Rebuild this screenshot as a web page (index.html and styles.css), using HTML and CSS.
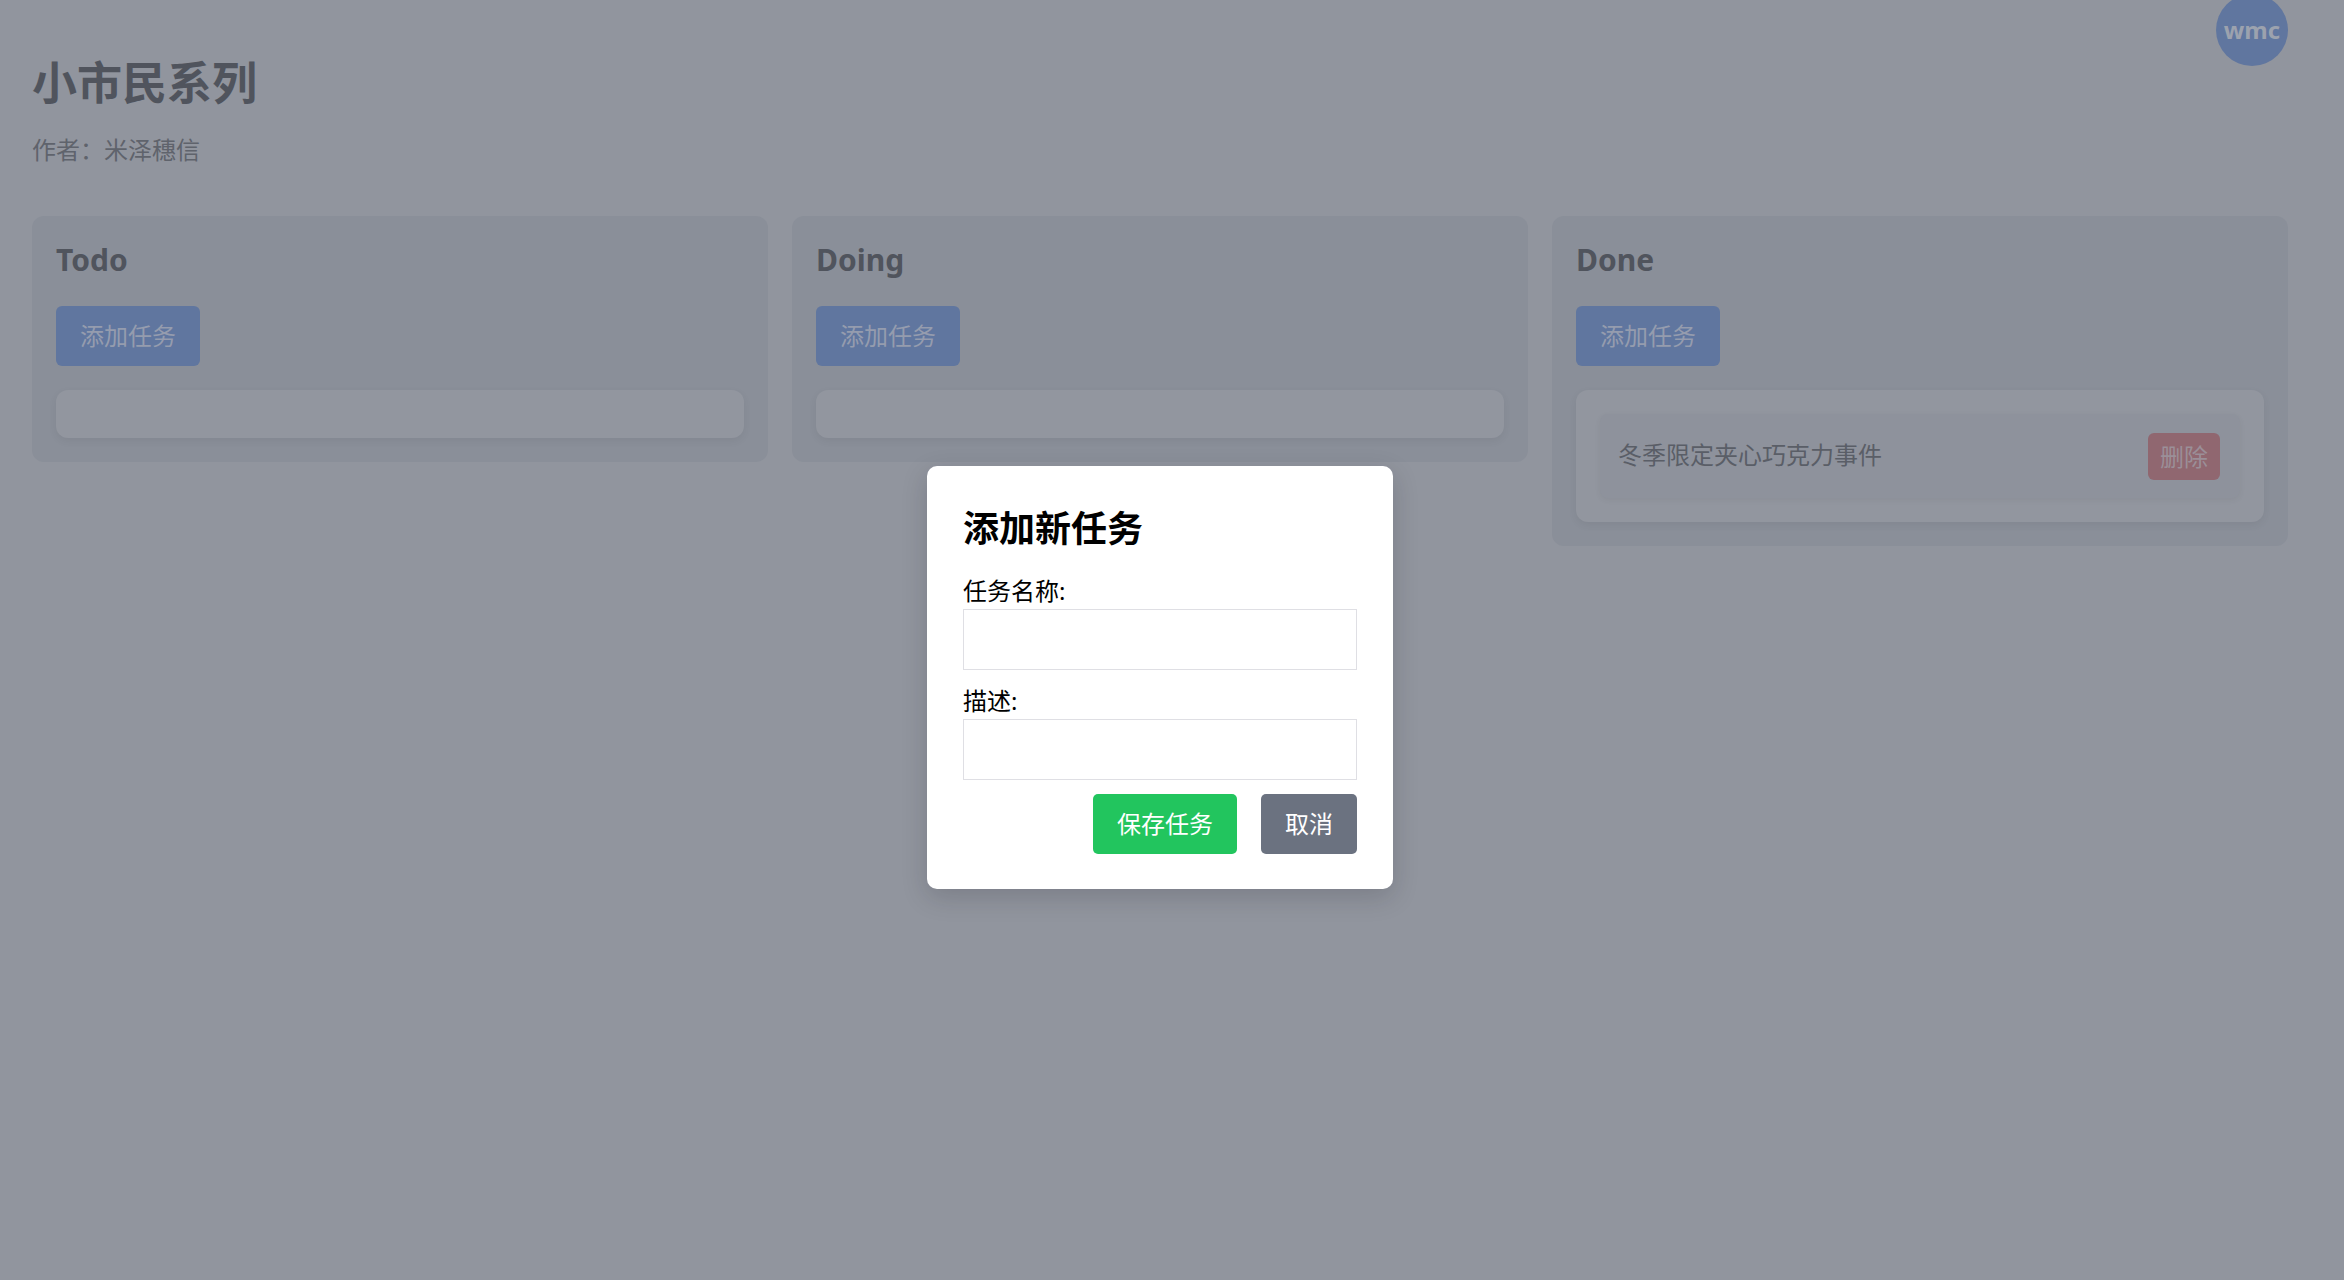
FILE: index.html
```html
<!DOCTYPE html>
<html lang="zh-CN">
<head>
<meta charset="utf-8">
<title>小市民系列</title>
<link rel="stylesheet" href="styles.css">
</head>
<body>
<div class="avatar">wmc</div>
<main class="app">
  <header class="page-head">
    <h1 class="page-title">小市民系列</h1>
    <p class="page-author">作者：米泽穗信</p>
  </header>
  <section class="board">
    <div class="column">
      <h2 class="column-title">Todo</h2>
      <button class="add-btn">添加任务</button>
      <div class="task-list"></div>
    </div>
    <div class="column">
      <h2 class="column-title">Doing</h2>
      <button class="add-btn">添加任务</button>
      <div class="task-list"></div>
    </div>
    <div class="column">
      <h2 class="column-title">Done</h2>
      <button class="add-btn">添加任务</button>
      <div class="task-list">
        <div class="task">
          <span class="task-name">冬季限定夹心巧克力事件</span>
          <button class="del-btn">删除</button>
        </div>
      </div>
    </div>
  </section>
</main>
<div class="overlay">
  <div class="modal">
    <h2 class="modal-title">添加新任务</h2>
    <label class="field-label">任务名称:</label>
    <input class="field-input" type="text">
    <label class="field-label">描述:</label>
    <input class="field-input" type="text">
    <div class="modal-actions">
      <button class="btn btn-save">保存任务</button>
      <button class="btn btn-cancel">取消</button>
    </div>
  </div>
</div>
</body>
</html>
```
FILE: styles.css
```css
* { box-sizing: border-box; }
html, body { margin: 0; padding: 0; }
body {
  width: 2344px;
  height: 1280px;
  overflow: hidden;
  position: relative;
  background: #91959e;
  font-family: "Noto Sans", "Noto Sans CJK SC", sans-serif;
}
.app {
  padding: 0 56px 0 32px;
}
.page-head {
  padding-top: 56px;
}
.page-title {
  margin: 0;
  font-size: 45px;
  line-height: 54px;
  font-weight: 700;
  color: #50545d;
}
.page-author {
  margin: 24px 0 0;
  font-size: 24px;
  line-height: 32px;
  color: #5f636c;
}
.board {
  margin-top: 50px;
  display: grid;
  grid-template-columns: repeat(3, 736px);
  gap: 24px;
  align-items: start;
}
.column {
  background: #8a8f99;
  border-radius: 12px;
  padding: 24px;
  display: flex;
  flex-direction: column;
  align-items: flex-start;
}
.column-title {
  margin: 2px 0 0;
  font-size: 30px;
  line-height: 36px;
  font-weight: 700;
  color: #50545d;
}
.add-btn {
  margin-top: 28px;
  height: 60px;
  padding: 0 24px;
  border: none;
  border-radius: 6px;
  background: #60769f;
  color: #959cae;
  font-family: inherit;
  font-size: 24px;
  line-height: 60px;
}
.task-list {
  margin-top: 24px;
  align-self: stretch;
  min-height: 48px;
  padding: 24px;
  background: #92969f;
  border-radius: 12px;
  box-shadow: 0 3px 8px rgba(0, 0, 0, 0.06);
}
.task-list:empty { padding: 0; }
.task {
  height: 84px;
  padding: 0 20px 0 18px;
  display: flex;
  align-items: center;
  justify-content: space-between;
  background: #8e929c;
  border-radius: 8px;
  box-shadow: 0 2px 6px rgba(0, 0, 0, 0.05);
}
.task-name {
  font-size: 24px;
  line-height: 32px;
  margin-top: -2px;
  color: #5a5e67;
}
.del-btn {
  height: 47px;
  padding: 0 12px;
  border: none;
  border-radius: 6px;
  background: #906770;
  color: #9b8f98;
  font-family: inherit;
  font-size: 24px;
  line-height: 47px;
}
.avatar {
  position: absolute;
  top: -6px;
  right: 56px;
  width: 72px;
  height: 72px;
  border-radius: 50%;
  background: #60769f;
  color: #9ca2ae;
  font-size: 24px;
  font-weight: 700;
  line-height: 72px;
  text-align: center;
}
.overlay {
  position: absolute;
  inset: 0;
}
.modal {
  position: absolute;
  left: 927px;
  top: 466px;
  width: 466px;
  padding: 41px 36px 35px;
  background: #ffffff;
  border-radius: 10px;
  box-shadow: 0 8px 26px rgba(20, 24, 34, 0.18);
  display: flex;
  flex-direction: column;
}
.modal-title {
  margin: 0 0 24px;
  font-size: 36px;
  line-height: 44px;
  font-weight: 700;
  color: #000;
}
.field-label {
  display: block;
  margin-bottom: 2px;
  font-size: 24px;
  line-height: 32px;
  color: #000;
}
.field-input {
  display: block;
  width: 100%;
  height: 61px;
  margin: 0 0 15px;
  border: 1px solid #dfdfe4;
  border-radius: 0;
  background: #fff;
  font-family: inherit;
  font-size: 24px;
}
.field-input + .field-label + .field-input { margin-bottom: 14px; }
.modal-actions {
  display: flex;
  justify-content: flex-end;
  gap: 24px;
}
.btn {
  height: 60px;
  padding: 0 24px;
  border: none;
  border-radius: 5px;
  color: #fff;
  font-family: inherit;
  font-size: 24px;
  line-height: 60px;
}
.btn-save { background: #22c55e; }
.btn-cancel { background: #6b7280; }
```
